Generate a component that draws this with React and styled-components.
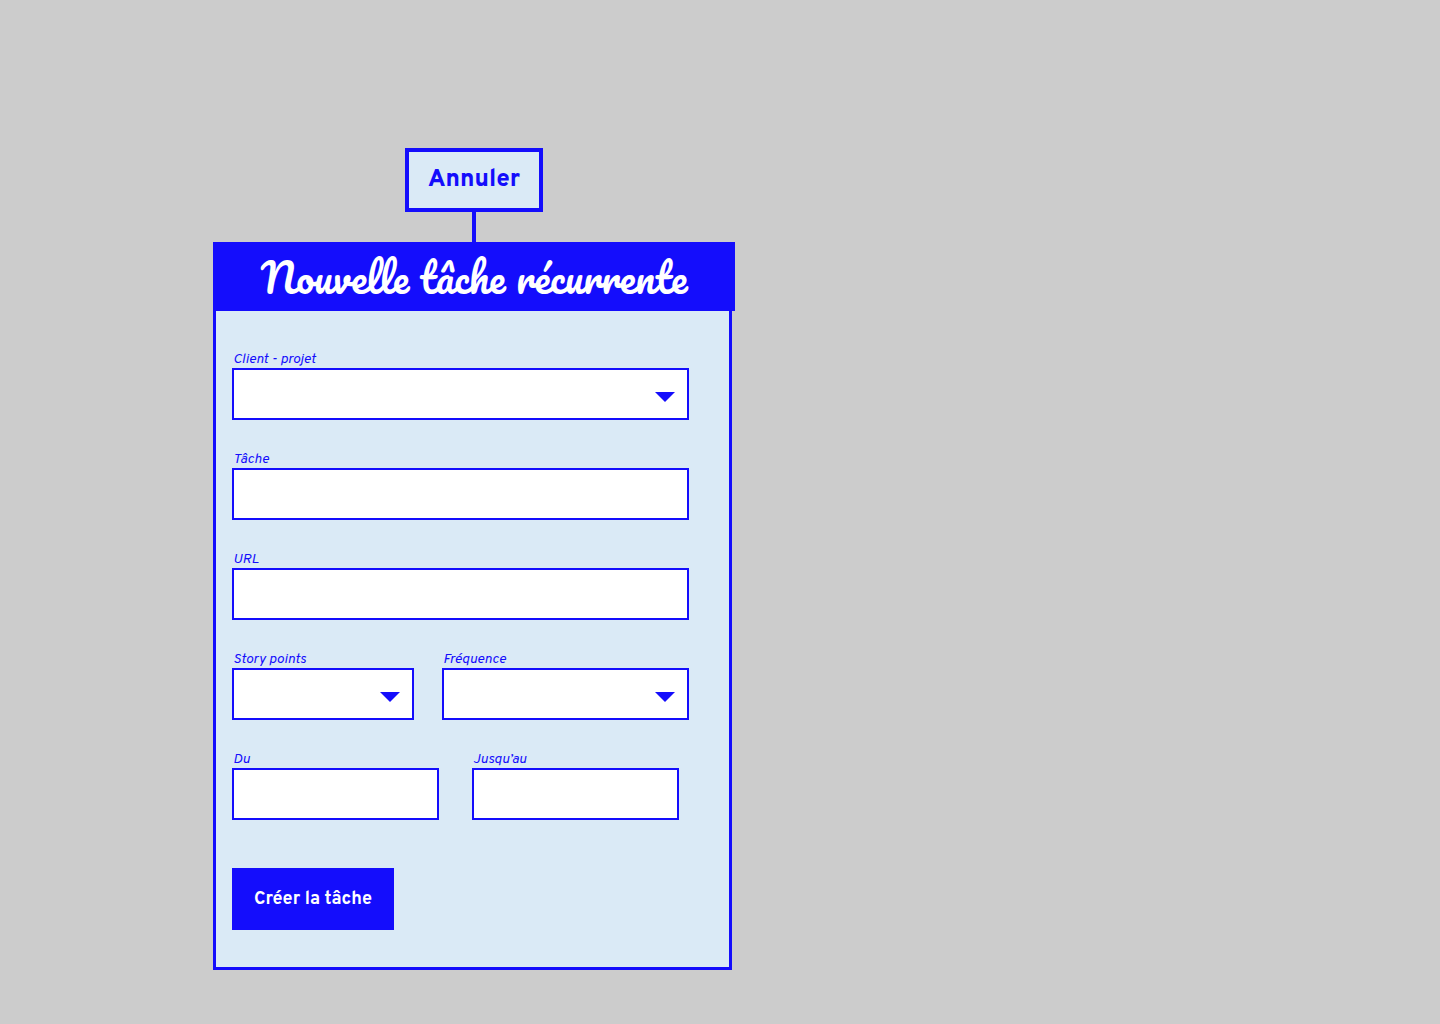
import React, { useState } from "react";
import styled, { createGlobalStyle } from "styled-components";

const blue = "#140dfc";
const pale = "#daeaf6";

const GlobalStyle = createGlobalStyle`
  * {
    box-sizing: border-box;
  }

  body {
    margin: 0;
    background-color: #cccccc;
    color: ${blue};
    font-family: Overpass, Roboto, sans-serif;
  }
`;

const Page = styled.main`
  min-height: 100vh;
  padding: 148px 16px 54px 213px;

  @media screen and (max-width: 760px) {
    padding: 32px 16px;
  }
`;

const Modal = styled.section`
  width: 100%;
  max-width: 522px;
`;

const Top = styled.div`
  display: flex;
  flex-direction: column;
  align-items: center;
`;

const Cancel = styled.button`
  height: 64px;
  min-width: 138px;
  padding: 0 16px;
  border: 4px solid ${blue};
  background-color: ${pale};
  color: ${blue};
  font-family: Overpass, Inter, sans-serif;
  font-size: 24px;
  font-weight: 800;
  line-height: 28px;
  white-space: nowrap;
  cursor: pointer;
`;

const Stem = styled.div`
  width: 4px;
  height: 30px;
  background-color: ${blue};
`;

const Title = styled.h1`
  margin: 0;
  padding: 5px 16px 4px;
  background-color: ${blue};
  color: white;
  text-align: center;
  font-family: Pacifico, Lato, cursive;
  font-size: 40px;
  font-weight: 400;
  line-height: 60px;
`;

const Form = styled.form`
  display: flex;
  flex-direction: column;
  gap: 28px;
  margin-right: 3px;
  padding: 37px 40px 37px 16px;
  border: 3px solid ${blue};
  border-top: none;
  background-color: ${pale};
`;

const Row = styled.div`
  display: grid;
  grid-template-columns: ${props => props.$columns};
  gap: ${props => props.$gap};
  padding-right: ${props => props.$inset || "0"};
`;

const Group = styled.div`
  min-width: 0;
`;

const Label = styled.label`
  display: block;
  padding: 4px 0 0 1px;
  font-size: 14px;
  font-style: italic;
  line-height: 16px;
`;

const Input = styled.input`
  display: block;
  width: 100%;
  height: 52px;
  padding: 0 12px;
  border: 2px solid ${blue};
  border-radius: 0;
  background-color: white;
  color: ${blue};
  font-family: inherit;
  font-size: 18px;
`;

const SelectBox = styled.div`
  position: relative;

  &::after {
    content: "";
    position: absolute;
    top: 24px;
    right: 14px;
    border: 10px solid transparent;
    border-top-color: ${blue};
    border-bottom: none;
    pointer-events: none;
  }
`;

const Select = styled.select`
  display: block;
  width: 100%;
  height: 52px;
  padding: 0 44px 0 12px;
  border: 2px solid ${blue};
  border-radius: 0;
  background-color: white;
  color: ${blue};
  font-family: inherit;
  font-size: 18px;
  appearance: none;
`;

const Submit = styled.button`
  align-self: flex-start;
  height: 62px;
  min-width: 162px;
  margin-top: 20px;
  padding: 2px 20px 0;
  border: none;
  background-color: ${blue};
  color: white;
  font-family: Overpass, Inter, sans-serif;
  font-size: 18px;
  font-weight: 700;
  line-height: 20px;
  cursor: pointer;
`;

const TextField = ({ id, label, value, onChange }) => (
  <Group>
    <Label htmlFor={id}>{label}</Label>
    <Input id={id} name={id} type="text" value={value} onChange={onChange} />
  </Group>
);

const SelectField = ({ id, label, value, onChange }) => (
  <Group>
    <Label htmlFor={id}>{label}</Label>
    <SelectBox>
      <Select id={id} name={id} value={value} onChange={onChange}>
        <option value=""></option>
      </Select>
    </SelectBox>
  </Group>
);

const App = () => {
  const [task, setTask] = useState({
    project: "",
    name: "",
    url: "",
    points: "",
    frequency: "",
    from: "",
    until: ""
  });

  function onChange(e) {
    setTask({ ...task, [e.target.name]: e.target.value });
  }

  function field(id, label) {
    return { id, label, value: task[id], onChange };
  }

  return (
    <Page>
      <GlobalStyle />
      <Modal>
        <Top>
          <Cancel type="button">Annuler</Cancel>
          <Stem />
        </Top>
        <Title>Nouvelle tâche récurrente</Title>
        <Form onSubmit={e => e.preventDefault()}>
          <SelectField {...field("project", "Client - projet")} />
          <TextField {...field("name", "Tâche")} />
          <TextField {...field("url", "URL")} />
          <Row $columns="182px 1fr" $gap="28px">
            <SelectField {...field("points", "Story points")} />
            <SelectField {...field("frequency", "Fréquence")} />
          </Row>
          <Row $columns="1fr 1fr" $gap="33px" $inset="10px">
            <TextField {...field("from", "Du")} />
            <TextField {...field("until", "Jusqu’au")} />
          </Row>
          <Submit type="submit">Créer la tâche</Submit>
        </Form>
      </Modal>
    </Page>
  );
};

export default App;
